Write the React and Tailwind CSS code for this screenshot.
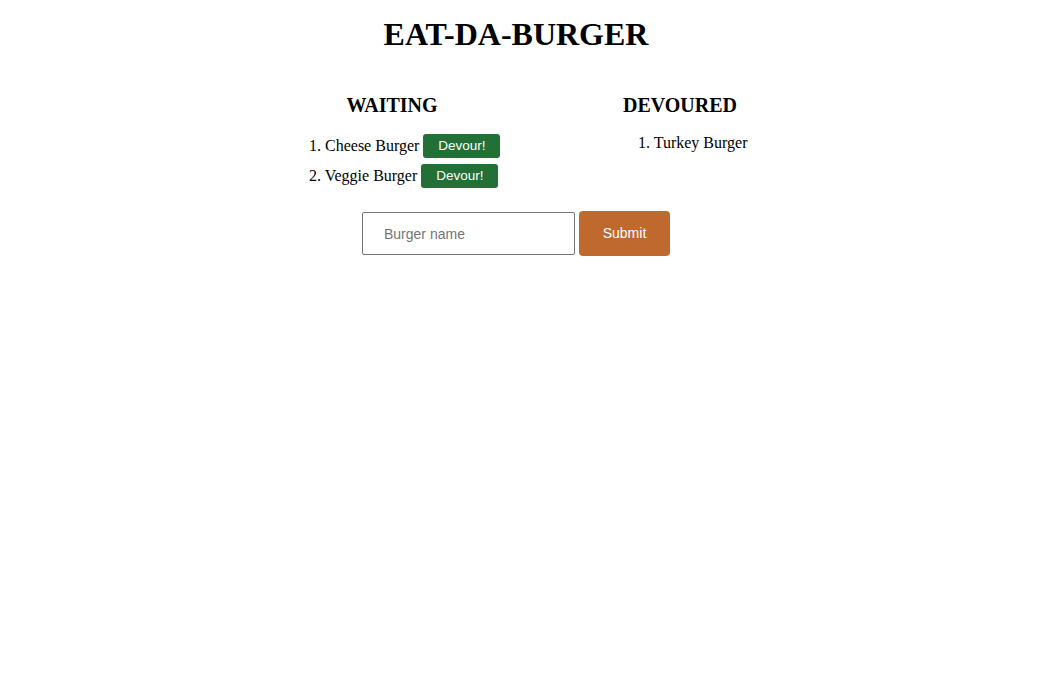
export default function App() {
  const serif = { fontFamily: '"Liberation Serif", "Times New Roman", serif' };
  const sans = { fontFamily: 'Arial, "Liberation Sans", sans-serif' };
  return (
    <div className="w-[1062px] h-[695px] bg-white text-black" style={serif}>
      <div className="w-[1032px]">
        <h1 className="text-[32px] font-bold text-center leading-[37px] pt-[16px]">EAT-DA-BURGER</h1>
        <div className="flex mt-[41px]">
          <div className="w-[288px] ml-[248px]">
            <h3 className="text-[20px] font-bold text-center leading-[22px]">WAITING</h3>
            <ol className="pl-[61px] mt-[15px] text-[16px]">
              <li className="h-[30px] flex items-center">
                <span>1. Cheese Burger</span>
                <button className="ml-[4px] w-[77px] h-[24px] rounded-[3px] bg-[#227036] text-white text-[13.5px]" style={sans}>Devour!</button>
              </li>
              <li className="h-[30px] flex items-center">
                <span>2. Veggie Burger</span>
                <button className="ml-[4px] w-[77px] h-[24px] rounded-[3px] bg-[#227036] text-white text-[13.5px]" style={sans}>Devour!</button>
              </li>
            </ol>
          </div>
          <div className="w-[288px]">
            <h3 className="text-[20px] font-bold text-center leading-[22px]">DEVOURED</h3>
            <ol className="pl-[102px] mt-[18px] text-[16px] leading-[18px]">
              <li>1. Turkey Burger</li>
            </ol>
          </div>
        </div>
        <div className="flex justify-center items-center gap-[4px] mt-[20px]" style={sans}>
          <input
            placeholder="Burger name"
            className="w-[213px] h-[43px] border border-[#767676] rounded-[2px] px-[21px] text-[14px] placeholder:text-[#757575] outline-none"
          />
          <button className="w-[91px] h-[45px] rounded-[4px] bg-[#c0692f] text-white text-[14px] font-normal">Submit</button>
        </div>
      </div>
    </div>
  );
}
